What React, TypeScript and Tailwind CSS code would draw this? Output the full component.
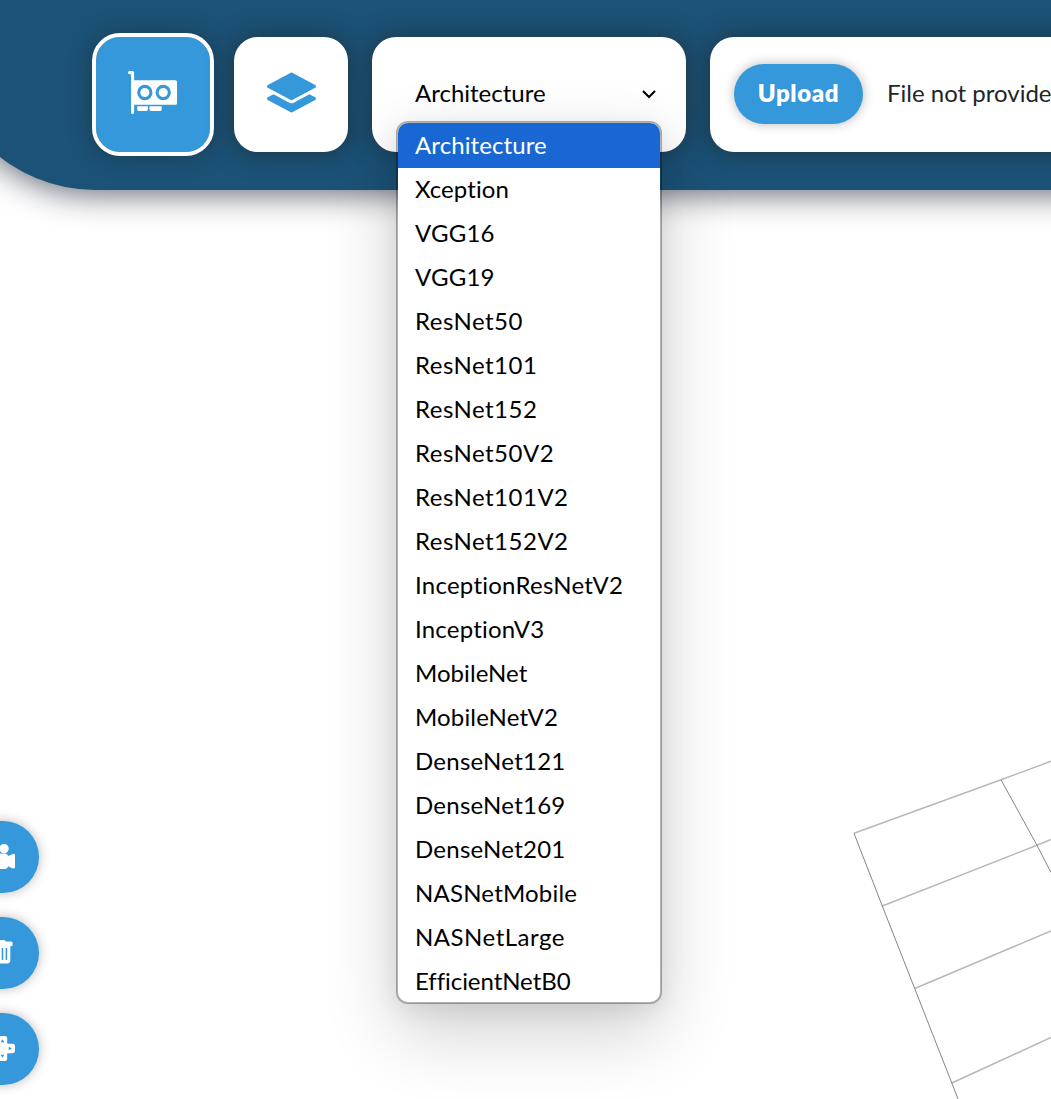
import type { ReactNode } from "react";
import { BsCameraReelsFill, BsDpadFill, BsGpuCard, BsLayersFill, BsTrashFill } from "react-icons/bs";

const options = [
  { name: "Architecture", tracking: "tracking-[0.1px]" },
  { name: "Xception", tracking: "tracking-[0.1px]" },
  { name: "VGG16", tracking: "tracking-[0.2px]" },
  { name: "VGG19", tracking: "tracking-[0.2px]" },
  { name: "ResNet50", tracking: "tracking-[0.5px]" },
  { name: "ResNet101", tracking: "tracking-[0.5px]" },
  { name: "ResNet152", tracking: "tracking-[0.5px]" },
  { name: "ResNet50V2", tracking: "tracking-[0.5px]" },
  { name: "ResNet101V2", tracking: "tracking-[0.5px]" },
  { name: "ResNet152V2", tracking: "tracking-[0.5px]" },
  { name: "InceptionResNetV2", tracking: "tracking-[0.25px]" },
  { name: "InceptionV3", tracking: "tracking-[0.2px]" },
  { name: "MobileNet", tracking: "tracking-[0.05px]" },
  { name: "MobileNetV2", tracking: "tracking-[0.15px]" },
  { name: "DenseNet121", tracking: "tracking-[0.25px]" },
  { name: "DenseNet169", tracking: "tracking-[0.25px]" },
  { name: "DenseNet201", tracking: "tracking-[0.25px]" },
  { name: "NASNetMobile", tracking: "tracking-[0.2px]" },
  { name: "NASNetLarge", tracking: "tracking-[0.5px]" },
  { name: "EfficientNetB0", tracking: "tracking-[-0.05px]" },
];

const cardShadow = "shadow-[0_0_24px_rgba(34,34,34,0.6)]";

function RoundButton({ children }: { children: ReactNode }) {
  return (
    <button className="flex size-[72px] items-center justify-center rounded-full bg-[#3498db] pr-px pb-[2px] text-white shadow-[0_0_12px_rgba(0,0,0,0.28)]">
      {children}
    </button>
  );
}

function OptionList() {
  return (
    <ul className="absolute top-[84px] left-6 z-20 h-[883px] w-[266px] overflow-hidden rounded-xl border-2 border-black/30 bg-white bg-clip-padding shadow-[0_28px_72px_rgba(0,0,0,0.19),0_6px_24px_rgba(0,0,0,0.08)]">
      {options.map(({ name, tracking }, i) => (
        <li
          key={name}
          className={`flex items-center pb-[2px] pl-[17px] ${tracking} ${
            i === 0 ? "h-[45px] bg-[#1967d2] pt-px text-white" : "h-11 text-black"
          }`}
        >
          {name}
        </li>
      ))}
    </ul>
  );
}

function FloorGrid() {
  return (
    <svg className="absolute right-0 bottom-0" width="211" height="359" viewBox="840 740 211 359" fill="none">
      <g stroke="#b8b8b8" strokeWidth="1.5">
        <path d="M854 833.3 1001 779.8 1051 761.3" />
        <path d="M882.3 906 1037 845.3 1051 839.5" />
        <path d="M914.7 988.5 1051 931" />
        <path d="M951.8 1083 1051 1037.5" />
      </g>
      <g stroke="#858585" strokeWidth="1">
        <path d="M854 833.3 882.3 906 914.7 988.5 951.8 1083 958 1099" />
        <path d="M1001 779.8 1037 845.3 1051 872.5" />
      </g>
    </svg>
  );
}

export default function App() {
  return (
    <div className="flex h-[1099px] w-[1051px] flex-col overflow-hidden bg-white font-[Lato,sans-serif] text-2xl">
      <header className="relative z-10 -ml-[58px] flex h-[190px] w-[1300px] shrink-0 items-start rounded-bl-[153px] bg-[#1b5276] pt-[37px] pl-[154px] shadow-[0_4px_32px_rgba(10,20,40,0.65)]">
        <button
          className={`mr-6 flex h-[115px] w-[114px] shrink-0 items-center justify-center rounded-3xl bg-[#3498db] pr-px pb-[5px] text-white outline-4 outline-white ${cardShadow}`}
        >
          <BsGpuCard size={49} />
        </button>
        <button
          className={`mr-6 flex h-[115px] w-[114px] shrink-0 items-center justify-center rounded-3xl bg-white pb-[5px] text-[#3498db] ${cardShadow}`}
        >
          <BsLayersFill size={49} />
        </button>
        <div className={`relative z-10 mr-6 h-[115px] w-[314px] shrink-0 rounded-3xl bg-white ${cardShadow}`}>
          <div className="flex h-full items-center justify-between pr-[30px] pl-[43px] text-black">
            <span className="pb-[3px]">Architecture</span>
            <svg width="14" height="9" viewBox="0 0 14 9" fill="none" stroke="currentColor" strokeWidth="2">
              <path d="m1 1 6 6 6-6" />
            </svg>
          </div>
          <OptionList />
        </div>
        <div className={`flex h-[115px] w-[480px] shrink-0 items-center gap-6 rounded-3xl bg-white pb-[2px] pl-6 ${cardShadow}`}>
          <button className="h-[60px] w-[129px] rounded-full bg-[#3498db] pb-px font-extrabold tracking-[0.6px] text-white shadow-[0_0_12px_rgba(0,0,0,0.28)]">
            Upload
          </button>
          <span className="pb-px whitespace-nowrap text-[#212529]">File not provided</span>
        </div>
      </header>
      <main className="relative flex-1">
        <FloorGrid />
        <nav className="-ml-[33px] flex w-[72px] flex-col gap-6 pt-[631px]">
          <RoundButton><BsCameraReelsFill size={25} /></RoundButton>
          <RoundButton><BsTrashFill size={25} /></RoundButton>
          <RoundButton><BsDpadFill size={25} /></RoundButton>
        </nav>
      </main>
    </div>
  );
}
